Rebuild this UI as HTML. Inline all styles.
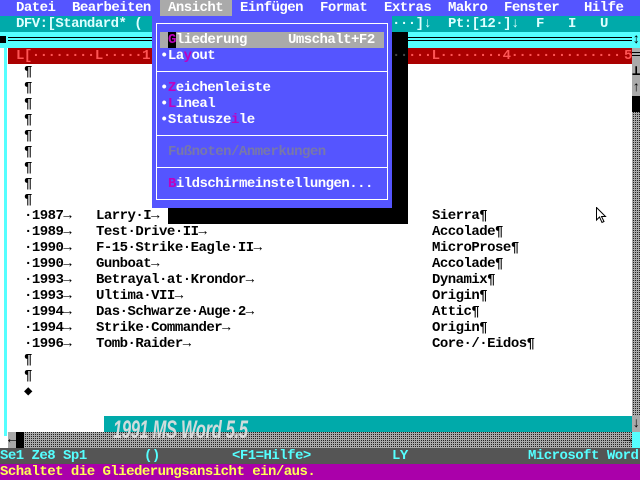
<!DOCTYPE html>
<html><head><meta charset="utf-8"><style>
*{margin:0;padding:0}
body{width:640px;height:480px;position:relative;overflow:hidden;background:#fff;font-family:"Liberation Mono","DejaVu Sans Mono",monospace;font-size:14px;letter-spacing:-0.52px;font-weight:bold;line-height:16px}
.a{position:absolute;white-space:pre;height:16px}
.r{position:absolute}
.dot{background-color:#aaa;background-image:conic-gradient(#222 25%,#aaa 0);background-size:2px 2px}
.hk{color:#c000c0}
</style></head><body>
<div class="r" style="left:0;top:0;width:640px;height:16px;background:#5555ff"></div>
<div class="r" style="left:160px;top:0;width:72px;height:16px;background:#aaa"></div>
<div class="a" style="left:16px;top:0;color:#fff">Datei</div>
<div class="a" style="left:72px;top:0;color:#fff">Bearbeiten</div>
<div class="a" style="left:168px;top:0;color:#fff">Ansicht</div>
<div class="a" style="left:240px;top:0;color:#fff">Einfügen</div>
<div class="a" style="left:320px;top:0;color:#fff">Format</div>
<div class="a" style="left:384px;top:0;color:#fff">Extras</div>
<div class="a" style="left:448px;top:0;color:#fff">Makro</div>
<div class="a" style="left:504px;top:0;color:#fff">Fenster</div>
<div class="a" style="left:584px;top:0;color:#fff">Hilfe</div>
<div class="r" style="left:0;top:16px;width:640px;height:16px;background:#00aaaa"></div>
<div class="a" style="left:16px;top:16px;color:#dff">DFV:[Standard* (</div>
<div class="a" style="left:392px;top:16px;color:#dff">···]↓</div>
<div class="a" style="left:448px;top:16px;color:#dff">Pt:[12·]↓</div>
<div class="a" style="left:536px;top:16px;color:#dff">F</div>
<div class="a" style="left:568px;top:16px;color:#dff">I</div>
<div class="a" style="left:600px;top:16px;color:#dff">U</div>
<div class="r" style="left:0;top:32px;width:640px;height:16px;background:#55ffff"></div>
<div class="r" style="left:0;top:36px;width:6px;height:7px;background:#000"></div>
<div class="r" style="left:8px;top:37px;width:624px;height:1px;background:#000"></div>
<div class="r" style="left:8px;top:40px;width:624px;height:1px;background:#000"></div>
<div class="a" style="left:632px;top:32px;color:#000">↕</div>
<div class="r" style="left:4px;top:48px;width:3px;height:388px;background:#55ffff"></div>
<div class="r" style="left:8px;top:48px;width:624px;height:16px;background:#aa0000"></div>
<div class="a" style="left:16px;top:48px;color:#ff5555">L[········L·····1··············2</div>
<div class="a" style="left:408px;top:48px;color:#ff5555">···L········4··············</div>
<div class="a" style="left:624px;top:48px;color:#ff5555">5</div>
<div class="r dot" style="left:632px;top:112px;width:8px;height:304px"></div>
<div class="r" style="left:632px;top:48px;width:8px;height:48px;background:#aaa"></div>
<div class="r" style="left:632px;top:52px;width:8px;height:1px;background:#000"></div>
<div class="r" style="left:632px;top:55px;width:8px;height:1px;background:#000"></div>
<div class="a" style="left:632px;top:64px;color:#000">⊥</div>
<div class="a" style="left:632px;top:80px;color:#000">↑</div>
<div class="r" style="left:632px;top:96px;width:8px;height:16px;background:#000"></div>
<div class="r" style="left:632px;top:416px;width:8px;height:16px;background:#aaa"></div>
<div class="a" style="left:632px;top:416px;color:#000">↓</div>
<div class="a" style="left:24px;top:64px;color:#000;line-height:16px;height:auto">¶
¶
¶
¶
¶
¶
¶
¶
¶</div>
<div class="a" style="left:24px;top:208px;color:#000;height:auto">·1987→
·1989→
·1990→
·1990→
·1993→
·1993→
·1994→
·1994→
·1996→
¶
¶
◆</div>
<div class="a" style="left:96px;top:208px;color:#000;height:auto">Larry·I→
Test·Drive·II→
F-15·Strike·Eagle·II→
Gunboat→
Betrayal·at·Krondor→
Ultima·VII→
Das·Schwarze·Auge·2→
Strike·Commander→
Tomb·Raider→</div>
<div class="a" style="left:432px;top:208px;color:#000;height:auto">Sierra¶
Accolade¶
MicroProse¶
Accolade¶
Dynamix¶
Origin¶
Attic¶
Origin¶
Core·/·Eidos¶</div>
<svg class="r" style="left:596px;top:207px" width="12" height="18" viewBox="0 0 12 18"><path d="M0.5 0.5 L0.5 13 L3.5 10 L6 15.5 L8 14.5 L5.5 9.5 L9.5 9.5 Z" fill="#fff" stroke="#000" stroke-width="1"/></svg>
<div class="r" style="left:104px;top:416px;width:528px;height:16px;background:#00aaaa"></div>
<div class="r dot" style="left:8px;top:432px;width:624px;height:16px"></div>
<div class="r" style="left:8px;top:432px;width:8px;height:16px;background:#aaa"></div>
<div class="a" style="left:8px;top:432px;color:#000">←</div>
<div class="r" style="left:16px;top:432px;width:8px;height:16px;background:#000"></div>
<div class="a" style="left:624px;top:432px;color:#000">→</div>
<div class="r" style="left:632px;top:432px;width:8px;height:16px;background:#55ffff"></div>
<div class="r" style="left:113px;top:415px;font-family:'Liberation Sans',sans-serif;font-style:italic;font-weight:bold;font-size:25px;line-height:30px;color:rgba(225,225,225,0.92);transform:scaleX(0.66);transform-origin:0 0;white-space:nowrap;letter-spacing:-0.5px">1991 MS Word 5.5</div>
<div class="r" style="left:0;top:448px;width:640px;height:16px;background:#555"></div>
<div class="a" style="left:0;top:448px;color:#55ffff">Se1 Ze8 Sp1</div>
<div class="a" style="left:144px;top:448px;color:#55ffff">()</div>
<div class="a" style="left:232px;top:448px;color:#55ffff">&lt;F1=Hilfe&gt;</div>
<div class="a" style="left:392px;top:448px;color:#55ffff">LY</div>
<div class="a" style="left:528px;top:448px;color:#55ffff">Microsoft Word</div>
<div class="r" style="left:0;top:464px;width:640px;height:16px;background:#aa00aa"></div>
<div class="a" style="left:0;top:464px;color:#ffff55">Schaltet die Gliederungsansicht ein/aus.</div>
<div class="r" style="left:392px;top:32px;width:16px;height:192px;background:#000"></div>
<div class="a" style="left:392px;top:48px;color:#444">··</div>
<div class="r" style="left:168px;top:208px;width:240px;height:16px;background:#000"></div>
<div class="r" style="left:152px;top:16px;width:240px;height:192px;background:#5555ff"></div>
<div class="r" style="left:156px;top:23px;width:232px;height:177px;border:1px solid #fff;box-sizing:border-box"></div>
<div class="r" style="left:156px;top:71px;width:232px;height:1px;background:#fff"></div>
<div class="r" style="left:156px;top:135px;width:232px;height:1px;background:#fff"></div>
<div class="r" style="left:156px;top:167px;width:232px;height:1px;background:#fff"></div>
<div class="r" style="left:160px;top:32px;width:224px;height:16px;background:#aaa"></div>
<div class="r" style="left:168px;top:32px;width:8px;height:16px;background:#000"></div>
<div class="a" style="left:168px;top:32px;color:#fff"><span class="hk">G</span>liederung</div>
<div class="a" style="left:288px;top:32px;color:#fff">Umschalt+F2</div>
<div class="a" style="left:160px;top:48px;color:#fff">•La<span class="hk">y</span>out</div>
<div class="a" style="left:160px;top:80px;color:#fff">•<span class="hk">Z</span>eichenleiste</div>
<div class="a" style="left:160px;top:96px;color:#fff">•<span class="hk">L</span>ineal</div>
<div class="a" style="left:160px;top:112px;color:#fff">•Statusze<span class="hk">i</span>le</div>
<div class="a" style="left:168px;top:144px;color:#7878a8">Fußnoten/Anmerkungen</div>
<div class="a" style="left:168px;top:176px;color:#fff"><span class="hk">B</span>ildschirmeinstellungen...</div>
</body></html>
